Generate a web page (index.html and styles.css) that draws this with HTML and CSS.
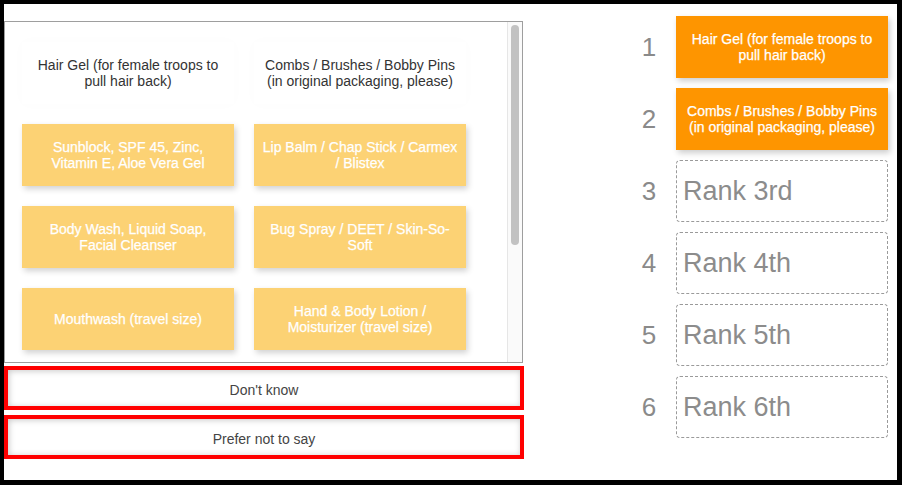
FILE: index.html
```html
<!DOCTYPE html>
<html lang="en">
<head>
    <meta charset="UTF-8">
    <title>Rank items</title>
    <link rel="stylesheet" href="styles.css">
</head>
<body>
    <div class="frame">
        <div class="left-col">
            <div class="item-panel">
                <div class="item-grid">
                    <div class="item placed">Hair Gel (for female troops to pull hair back)</div>
                    <div class="item placed">Combs / Brushes / Bobby Pins (in original packaging, please)</div>
                    <div class="item">Sunblock, SPF 45, Zinc, Vitamin E, Aloe Vera Gel</div>
                    <div class="item">Lip Balm / Chap Stick / Carmex / Blistex</div>
                    <div class="item">Body Wash, Liquid Soap, Facial Cleanser</div>
                    <div class="item">Bug Spray / DEET / Skin-So-Soft</div>
                    <div class="item">Mouthwash (travel size)</div>
                    <div class="item">Hand &amp; Body Lotion / Moisturizer (travel size)</div>
                </div>
                <div class="scrollbar">
                    <div class="scroll-thumb"></div>
                </div>
            </div>
            <div class="option option-first"><div class="option-btn">Don't know</div></div>
            <div class="option"><div class="option-btn">Prefer not to say</div></div>
        </div>

        <div class="rank-col">
            <div class="rank-row">
                <span class="rank-num">1</span>
                <div class="rank-slot filled">Hair Gel (for female troops to pull hair back)</div>
            </div>
            <div class="rank-row">
                <span class="rank-num">2</span>
                <div class="rank-slot filled">Combs / Brushes / Bobby Pins (in original packaging, please)</div>
            </div>
            <div class="rank-row">
                <span class="rank-num">3</span>
                <div class="rank-slot empty">Rank 3rd</div>
            </div>
            <div class="rank-row">
                <span class="rank-num">4</span>
                <div class="rank-slot empty">Rank 4th</div>
            </div>
            <div class="rank-row">
                <span class="rank-num">5</span>
                <div class="rank-slot empty">Rank 5th</div>
            </div>
            <div class="rank-row">
                <span class="rank-num">6</span>
                <div class="rank-slot empty">Rank 6th</div>
            </div>
        </div>
    </div>
</body>
</html>
```

FILE: styles.css
```css
/* General */
html, body {
    margin: 0;
    padding: 0;
    background-color: #ffffff;
}

body {
    font-family: 'Liberation Sans', Arial, sans-serif;
    font-size: 14px;
    color: #333333;
}

.frame {
    box-sizing: border-box;
    width: 902px;
    height: 485px;
    border: 4px solid #000000;
    border-right-width: 5px;
    border-bottom-width: 5px;
    display: flex;
    overflow: hidden;
}

/* Left column: item list */
.left-col {
    width: 520px;
    flex-shrink: 0;
}

.item-panel {
    box-sizing: border-box;
    width: 519px;
    height: 342px;
    margin-top: 17px;
    border: 1px solid #9e9e9e;
    display: flex;
    overflow: hidden;
}

.item-grid {
    flex: 1;
    display: grid;
    grid-template-columns: 212px 212px;
    grid-auto-rows: 62px;
    gap: 20px;
    padding: 20px 17px 0 17px;
}

/* Scrollbar drawn by hand */
.scrollbar {
    box-sizing: border-box;
    width: 15px;
    padding: 3px;
    background-color: #fafafa;
    border-left: 1px solid #e6e6e6;
}

.scroll-thumb {
    width: 8px;
    height: 220px;
    border-radius: 4px;
    background-color: #c2c2c2;
}

.item {
    box-sizing: border-box;
    display: flex;
    align-items: center;
    justify-content: center;
    padding: 0 8px;
    text-align: center;
    line-height: 16px;
    color: #ffffff;
    -webkit-text-stroke: 0.25px #ffffff;
    background-color: #fcd274;
    box-shadow: 2px 3px 6px rgba(0, 0, 0, 0.18);
}

.item.placed {
    color: #333333;
    -webkit-text-stroke: 0;
    background-color: #ffffff;
    box-shadow: 0 0 14px rgba(0, 0, 0, 0.015);
}

/* Extra answer options */
.option {
    box-sizing: border-box;
    height: 44px;
    margin-top: 5px;
    border: 4px solid #ff0000;
}

.option-first {
    margin-top: 3px;
}

.option-btn {
    box-sizing: border-box;
    height: 100%;
    padding-top: 3px;
    display: flex;
    align-items: center;
    justify-content: center;
    color: #444444;
    background-color: #ffffff;
    box-shadow: inset 1px 1px 6px rgba(0, 0, 0, 0.22);
}

/* Right column: ranking slots */
.rank-col {
    margin-left: 112px;
    padding-top: 12px;
    display: flex;
    flex-direction: column;
    gap: 10px;
}

.rank-row {
    display: flex;
    align-items: center;
}

.rank-num {
    width: 26px;
    margin-right: 14px;
    text-align: center;
    font-size: 26px;
    color: #8a8a8a;
}

.rank-slot {
    box-sizing: border-box;
    width: 212px;
    height: 62px;
    display: flex;
    align-items: center;
}

.rank-slot.filled {
    justify-content: center;
    padding: 0 8px;
    text-align: center;
    line-height: 16px;
    color: #ffffff;
    -webkit-text-stroke: 0.25px #ffffff;
    background-color: #fe9500;
    box-shadow: 2px 3px 6px rgba(0, 0, 0, 0.2);
}

.rank-slot.empty {
    padding-left: 6px;
    border: 1px dashed #9a9a9a;
    border-radius: 4px;
    font-size: 27px;
    color: #8c8c8c;
}
```
